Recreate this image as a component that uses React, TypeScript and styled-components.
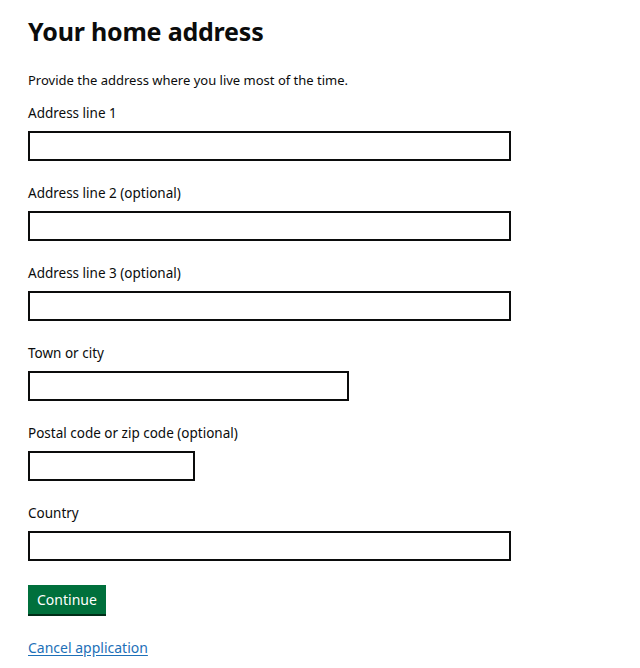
import styled, { createGlobalStyle } from 'styled-components';

const GlobalStyle = createGlobalStyle`
  body {
    margin: 0;
    background: #ffffff;
    font-family: 'Noto Sans', 'Liberation Sans', sans-serif;
    color: #0b0c0c;
  }
`;

const fields: Array<{ label: string; width: string }> = [
  { label: 'Address line 1', width: '483px' },
  { label: 'Address line 2 (optional)', width: '483px' },
  { label: 'Address line 3 (optional)', width: '483px' },
  { label: 'Town or city', width: '321px' },
  { label: 'Postal code or zip code (optional)', width: '167px' },
  { label: 'Country', width: '483px' },
];

export default function App() {
  return (
    <>
      <GlobalStyle />
      <Page>
        <Heading>Your home address</Heading>
        <Hint>Provide the address where you live most of the time.</Hint>
        {fields.map((field) => {
          return (
            <FormGroup key={field.label}>
              <Label>{field.label}</Label>
              <TextInput type="text" $width={field.width} />
            </FormGroup>
          );
        })}
        <Button type="button">Continue</Button>
        <CancelLink href="#">Cancel application</CancelLink>
      </Page>
    </>
  );
}

const Page = styled.main`
  display: flex;
  flex-direction: column;
  align-items: flex-start;
  padding: 14px 28px 0;
`;

const Heading = styled.h1`
  margin: 0;
  font-size: 25px;
  line-height: 34px;
  font-weight: 700;
  letter-spacing: -0.2px;
`;

const Hint = styled.p`
  margin: 22px 0 13px;
  font-size: 13px;
  line-height: 20px;
`;

const FormGroup = styled.div`
  display: flex;
  flex-direction: column;
  margin-bottom: 22px;
`;

const Label = styled.label`
  font-size: 13.5px;
  line-height: 20px;
  margin-bottom: 8px;
`;

interface TextInputProps {
  $width: string;
}

const TextInput = styled.input<TextInputProps>`
  box-sizing: border-box;
  width: ${({ $width }) => $width};
  height: 30px;
  margin: 0;
  padding: 4px;
  border: 2px solid #0b0c0c;
  border-radius: 0;
  font: inherit;
  background: #ffffff;
`;

const Button = styled.button`
  margin: 2px 0 0;
  padding: 5px 9px 4px;
  height: 29px;
  border: 0;
  border-radius: 0;
  background: #00703c;
  box-shadow: 0 2px 0 #002d18;
  color: #ffffff;
  font-family: inherit;
  font-size: 14px;
  line-height: 20px;
  cursor: pointer;
`;

const CancelLink = styled.a`
  margin-top: 24px;
  color: #1d70b8;
  font-size: 14px;
  line-height: 20px;
  text-decoration: underline;
  text-underline-offset: 2px;
`;
